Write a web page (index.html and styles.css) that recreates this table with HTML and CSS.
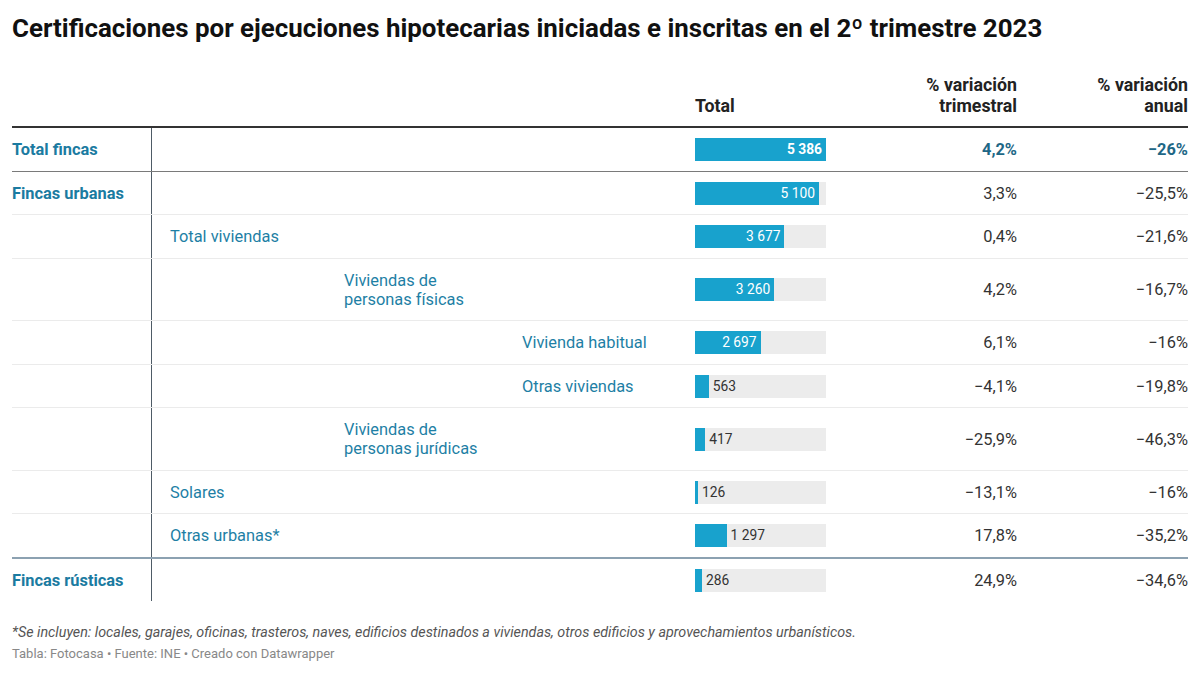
FILE: index.html
```html
<!DOCTYPE html>
<html lang="es">
<head>
<meta charset="utf-8">
<title>Certificaciones por ejecuciones hipotecarias</title>
<link rel="stylesheet" href="styles.css">
</head>
<body>
<div class="chart">
  <h1 class="title">Certificaciones por ejecuciones hipotecarias iniciadas e inscritas en el 2º trimestre 2023</h1>
  <div class="table">
    <div class="row head">
      <div class="h-total">Total</div>
      <div class="h-num c6">% variación<br>trimestral</div>
      <div class="h-num c7">% variación<br>anual</div>
    </div>

    <div class="row strong sep-dark">
      <div class="cell c1 lbl b">Total fincas</div>
      <div class="cell c5"><div class="track"><div class="fill in" style="width:100%"><span class="blab b">5 386</span></div></div></div>
      <div class="cell c6 num bv">4,2%</div>
      <div class="cell c7 num bv">−26%</div>
    </div>

    <div class="row">
      <div class="cell c1 lbl b">Fincas urbanas</div>
      <div class="cell c5"><div class="track"><div class="fill in" style="width:94.69%"><span class="blab">5 100</span></div></div></div>
      <div class="cell c6 num">3,3%</div>
      <div class="cell c7 num">−25,5%</div>
    </div>

    <div class="row">
      <div class="cell c1"></div>
      <div class="cell c2 lbl">Total viviendas</div>
      <div class="cell c5"><div class="track"><div class="fill in" style="width:68.27%"><span class="blab">3 677</span></div></div></div>
      <div class="cell c6 num">0,4%</div>
      <div class="cell c7 num">−21,6%</div>
    </div>

    <div class="row">
      <div class="cell c1"></div>
      <div class="cell c3 lbl">Viviendas de personas físicas</div>
      <div class="cell c5"><div class="track"><div class="fill in" style="width:60.53%"><span class="blab">3 260</span></div></div></div>
      <div class="cell c6 num">4,2%</div>
      <div class="cell c7 num">−16,7%</div>
    </div>

    <div class="row">
      <div class="cell c1"></div>
      <div class="cell c4 lbl">Vivienda habitual</div>
      <div class="cell c5"><div class="track"><div class="fill in" style="width:50.07%"><span class="blab">2 697</span></div></div></div>
      <div class="cell c6 num">6,1%</div>
      <div class="cell c7 num">−16%</div>
    </div>

    <div class="row">
      <div class="cell c1"></div>
      <div class="cell c4 lbl">Otras viviendas</div>
      <div class="cell c5"><div class="track"><div class="fill" style="width:10.45%"></div><span class="blab out">563</span></div></div>
      <div class="cell c6 num">−4,1%</div>
      <div class="cell c7 num">−19,8%</div>
    </div>

    <div class="row">
      <div class="cell c1"></div>
      <div class="cell c3 lbl">Viviendas de personas jurídicas</div>
      <div class="cell c5"><div class="track"><div class="fill" style="width:7.74%"></div><span class="blab out">417</span></div></div>
      <div class="cell c6 num">−25,9%</div>
      <div class="cell c7 num">−46,3%</div>
    </div>

    <div class="row">
      <div class="cell c1"></div>
      <div class="cell c2 lbl">Solares</div>
      <div class="cell c5"><div class="track"><div class="fill" style="width:2.34%"></div><span class="blab out">126</span></div></div>
      <div class="cell c6 num">−13,1%</div>
      <div class="cell c7 num">−16%</div>
    </div>

    <div class="row sep-blue">
      <div class="cell c1"></div>
      <div class="cell c2 lbl">Otras urbanas*</div>
      <div class="cell c5"><div class="track"><div class="fill" style="width:24.08%"></div><span class="blab out">1 297</span></div></div>
      <div class="cell c6 num">17,8%</div>
      <div class="cell c7 num">−35,2%</div>
    </div>

    <div class="row last">
      <div class="cell c1 lbl b">Fincas rústicas</div>
      <div class="cell c5"><div class="track"><div class="fill" style="width:5.31%"></div><span class="blab out">286</span></div></div>
      <div class="cell c6 num">24,9%</div>
      <div class="cell c7 num">−34,6%</div>
    </div>
  </div>
  <p class="note">*Se incluyen: locales, garajes, oficinas, trasteros, naves, edificios destinados a viviendas, otros edificios y aprovechamientos urbanísticos.</p>
  <p class="source">Tabla: Fotocasa • Fuente: INE • Creado con Datawrapper</p>
</div>
</body>
</html>
```

FILE: styles.css
```css
* { box-sizing: border-box; }
html, body { margin: 0; padding: 0; background: #fff; }
body { font-family: Roboto, "Noto Sans", "Liberation Sans", sans-serif; color: #333; }

.chart { padding: 12px 12px 0 12px; width: 1200px; }

.title {
  margin: 0;
  font-size: 25.9px;
  line-height: 32px;
  font-weight: 700;
  color: #111;
}

.table { margin-top: 30px; width: 1176px; }

.row {
  display: grid;
  grid-template-columns: 140px 173px 178px 173px 150px 191px 171px;
  border-bottom: 1px solid #ebebeb;
}
.row.head {
  border-bottom: 2px solid #333;
  padding-bottom: 10px;
  align-items: end;
  font-size: 17.8px;
  line-height: 21px;
  font-weight: 700;
  color: #222;
}
.row.sep-dark { border-bottom: 1px solid #7a7a7a; }
.row.sep-blue { border-bottom: 2px solid #8ca1b1; }
.row.last { border-bottom: none; }

.h-total { grid-column: 5; padding-left: 19px; }
.h-num { text-align: right; }
.c1 { grid-column: 1; border-right: 1px solid #4e5b66; }
.c2 { grid-column: 2; padding-left: 18px; }
.c3 { grid-column: 3; padding-left: 19px; }
.c4 { grid-column: 4; padding-left: 19px; }
.c5 { grid-column: 5; padding-left: 19px; }
.c6 { grid-column: 6; }
.c7 { grid-column: 7; }

.cell {
  display: flex;
  align-items: center;
  padding-top: 12px;
  padding-bottom: 11.5px;
  font-size: 16.4px;
  line-height: 19px;
}
.lbl { color: #1e7fa5; }
.lbl.b { font-weight: 700; color: #1b7ba1; }
.num { justify-content: flex-end; color: #333; }
.num.bv { font-weight: 700; color: #1e6786; }

.track {
  display: flex;
  align-items: center;
  width: 131px;
  height: 23px;
  margin: -2px 0;
  background: #ececec;
}
.fill {
  height: 23px;
  background: #18a2cd;
  display: flex;
  align-items: center;
  justify-content: flex-end;
  flex-shrink: 0;
}
.blab {
  font-size: 13.8px;
  line-height: 23px;
  white-space: nowrap;
}
.fill.in .blab { color: #fff; padding-right: 4px; }
.blab.out { color: #333; padding-left: 4px; }
.blab.b { font-weight: 700; }

.note {
  margin: 22px 0 0;
  font-size: 14.3px;
  line-height: 19px;
  font-style: italic;
  color: #555;
}
.source {
  margin: 3px 0 0;
  font-size: 13px;
  line-height: 17px;
  color: #888;
}
```
